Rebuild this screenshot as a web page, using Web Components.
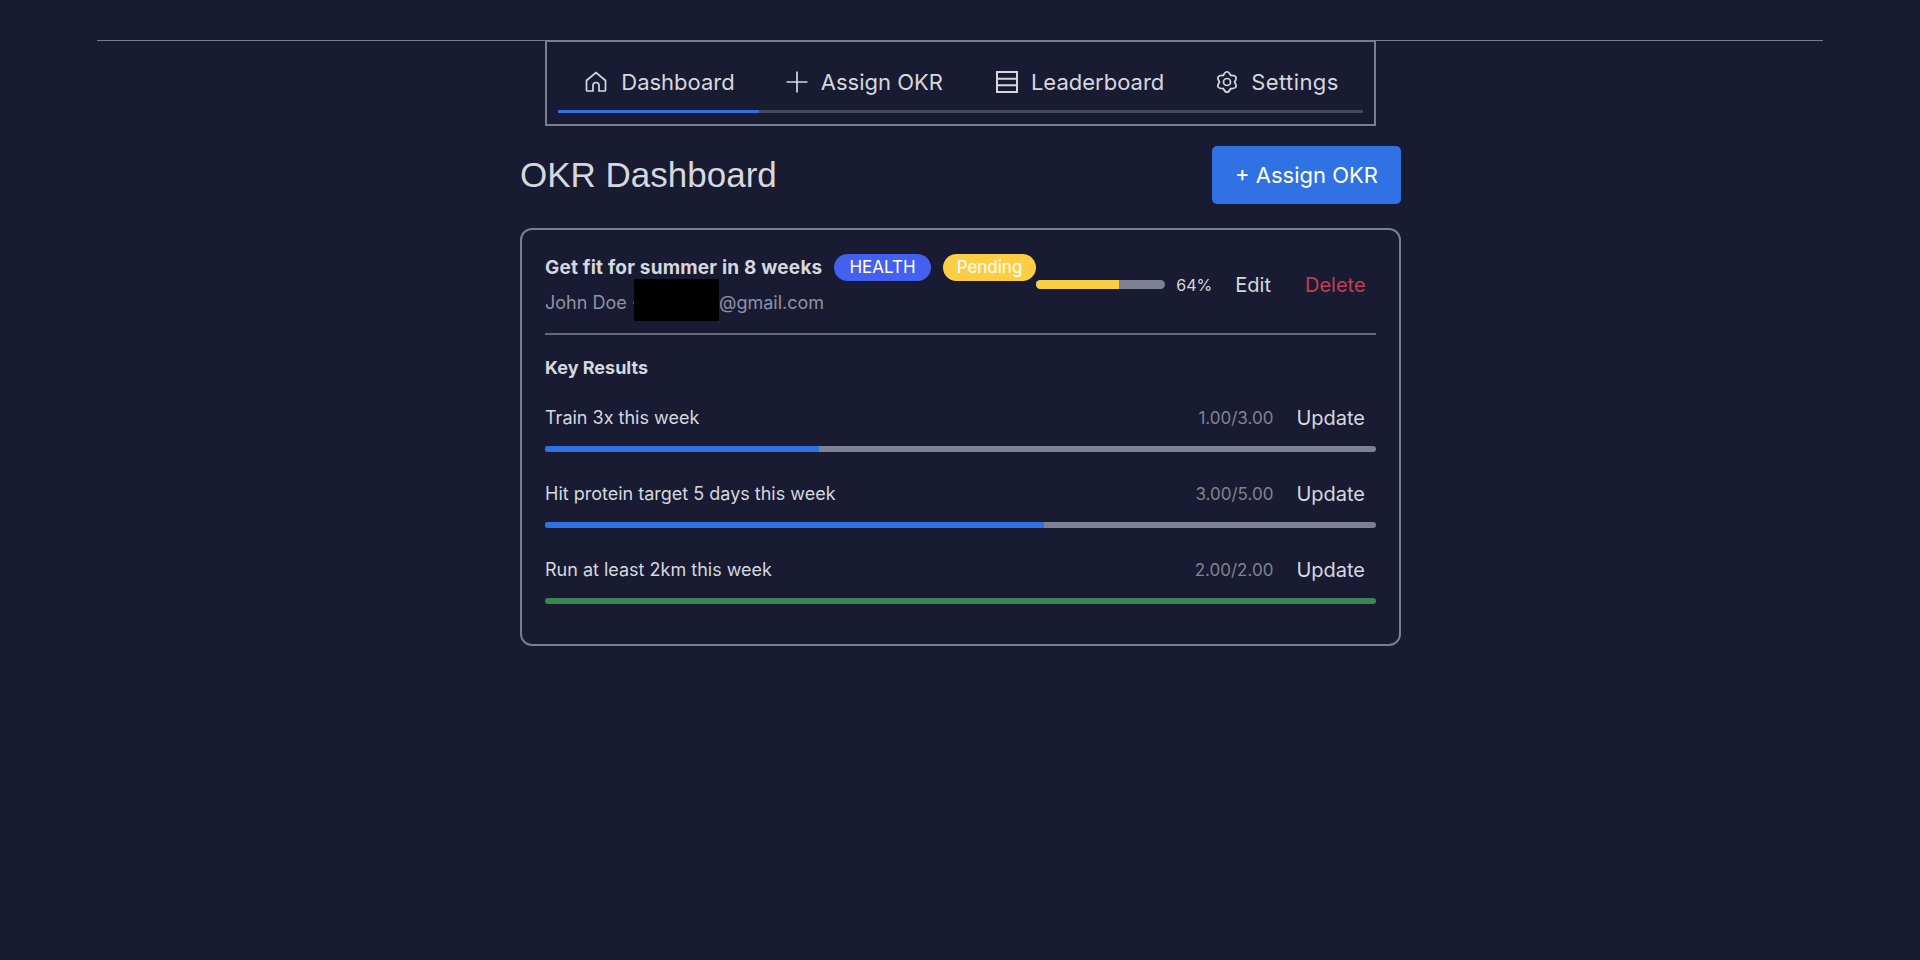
<!DOCTYPE html>
<html>
<head>
<meta charset="utf-8">
<title>OKR Dashboard</title>
<style>
  html, body { margin: 0; height: 100%; background: #191b33; }
  body { font-family: "Inter", "Liberation Sans", sans-serif; color: #d5d8df; }
</style>
</head>
<body>
<okr-app></okr-app>

<script>
const ICONS = {
  home: '<path d="M2.500 10.500 12 2.500l9.500 8V20a1 1 0 0 1-1 1H15v-5.500a3 3 0 0 0-6 0V21H3.500a1 1 0 0 1-1-1z"/>',
  plus: '<path d="M12 1.500v21M1.500 12h21"/>',
  table: '<rect x="2" y="2" width="20" height="20" stroke-width="2"/><path d="M2 8.700h20M2 15.300h20" stroke-width="2"/>',
  gear: '<path d="M8.250 5.500Q12-2 15.750 5.500 24.100 5 19.500 12 24.100 19 15.750 18.500 12 26 8.250 18.500-.1 19 4.500 12-.1 5 8.250 5.500z"/><circle cx="12" cy="12" r="3.500"/>'
}

class NavTab extends HTMLElement {
  connectedCallback () {
    const icon = this.getAttribute('icon')
    const shadow = this.attachShadow({ mode: 'open' })
    shadow.innerHTML = /* html */`
    <style>
      :host{
        display: flex;
        align-items: center;
        gap: 12px;
        height: 71px;
        padding: 11px 26px 0;
        font-size: 22px;
        color: #d5d8df;
        white-space: nowrap;
        box-sizing: border-box;
        border-bottom: 3px solid #44475e;
      }
      :host([active]){
        gap: 13px;
        padding-right: 24px;
        border-bottom-color: #3072e4;
      }
      :host(:last-child){
        padding-left: 25px;
        padding-right: 24px;
        letter-spacing: .4px;
      }
      svg{
        width: 24px;
        height: 24px;
        fill: none;
        stroke: currentColor;
        stroke-width: 1.7;
        flex: none;
      }
    </style>
    <svg viewBox="0 0 24 24">${ICONS[icon]}</svg>
    <slot></slot>
    `
  }
}

class NavBar extends HTMLElement {
  connectedCallback () {
    const shadow = this.attachShadow({ mode: 'open' })
    shadow.innerHTML = /* html */`
    <style>
      :host{
        display: flex;
        justify-content: center;
        padding-top: 40px;
      }
      .rule{
        border-top: 1px solid #797e93;
        width: 1726px;
        display: flex;
        justify-content: center;
      }
      nav{
        display: flex;
        border: 2px solid #797e93;
        border-top-width: 1px;
        padding: 0 11px 11px;
        margin-left: 1px;
      }
    </style>
    <div class="rule">
      <nav>
        <slot></slot>
      </nav>
    </div>
    `
  }
}

class PageHeader extends HTMLElement {
  connectedCallback () {
    const shadow = this.attachShadow({ mode: 'open' })
    shadow.innerHTML = /* html */`
    <style>
      :host{
        display: flex;
        justify-content: space-between;
        align-items: center;
        margin-bottom: 24px;
      }
      h1{
        margin: 0;
        font: 400 35px "Liberation Sans", sans-serif;
        color: #d5d8df;
      }
      button{
        background: #3072e4;
        color: #fff;
        border: none;
        border-radius: 5px;
        font: 400 22px "Inter", sans-serif;
        width: 189px;
        height: 58px;
        padding: 0;
      }
    </style>
    <h1>OKR Dashboard</h1>
    <button>+ Assign OKR</button>
    `
  }
}

class KeyResult extends HTMLElement {
  connectedCallback () {
    const value = this.getAttribute('value')
    const pct = this.getAttribute('pct')
    const color = this.getAttribute('color') || '#3072e4'
    const shadow = this.attachShadow({ mode: 'open' })
    shadow.innerHTML = /* html */`
    <style>
      :host{
        display: block;
        margin-top: 21px;
      }
      .top{
        display: flex;
        align-items: center;
        height: 40px;
        font-size: 18px;
        color: #d5d8df;
      }
      .name{
        flex: 1;
      }
      .value{
        color: #80848f;
        font-size: 17px;
        padding-top: 2px;
      }
      .update{
        font-size: 20px;
        margin-left: 23px;
        padding: 2px 11px 0 0;
      }
      .track{
        height: 6px;
        margin-top: 9px;
        background: #7e8195;
        border-radius: 3px;
        overflow: hidden;
      }
      .fill{
        height: 100%;
        width: ${pct}%;
        background: ${color};
      }
    </style>
    <div class="top">
      <span class="name"><slot></slot></span>
      <span class="value">${value}</span>
      <span class="update">Update</span>
    </div>
    <div class="track"><div class="fill"></div></div>
    `
  }
}

class OkrCard extends HTMLElement {
  connectedCallback () {
    const shadow = this.attachShadow({ mode: 'open' })
    shadow.innerHTML = /* html */`
    <style>
      :host{
        display: block;
        border: 2px solid #797e93;
        border-radius: 12px;
        padding: 23px 23px 40px;
      }
      .head{
        display: flex;
        align-items: center;
        height: 82px;
        box-sizing: border-box;
        border-bottom: 2px solid #65687e;
        padding-bottom: 17px;
      }
      .info{
        display: flex;
        flex-direction: column;
        align-self: flex-start;
      }
      .title-line{
        display: flex;
        align-items: center;
        gap: 12px;
        height: 28px;
      }
      .title{
        font-size: 19px;
        font-weight: 700;
        letter-spacing: .2px;
        white-space: nowrap;
      }
      .pill{
        border-radius: 14px;
        height: 27px;
        padding: 0 15px;
        font-size: 17px;
        display: flex;
        align-items: center;
        color: #fff;
      }
      .health{ background: #4360f0; }
      .pending{ background: #fcce45; padding: 0 14px; }
      .owner{
        color: #8f92a5;
        font-size: 18px;
        margin-top: 10px;
        white-space: nowrap;
      }
      .redact{
        position: relative;
        display: inline-block;
        width: 85px;
        height: 1em;
        margin-left: -8px;
      }
      .redact::after{
        content: "";
        position: absolute;
        left: 0;
        top: -12px;
        width: 85px;
        height: 42px;
        background: #000;
      }
      .meter{
        width: 129px;
        height: 9px;
        background: #7e8195;
        border-radius: 5px;
        overflow: hidden;
        flex: none;
        margin-left: auto;
      }
      .meter div{
        width: 64%;
        height: 100%;
        background: #fcce45;
      }
      .pct{
        font-size: 16px;
        margin-left: 11px;
      }
      .act{
        font-size: 20px;
        margin-left: 23px;
      }
      .del{
        color: #c43d52;
        margin-left: 34px;
        padding-right: 13px;
      }
      h2{
        margin: 24px 0 0;
        font-size: 18px;
        font-weight: 700;
        height: 17px;
        line-height: 17px;
      }
    </style>
    <div class="head">
      <div class="info">
        <div class="title-line">
          <span class="title">Get fit for summer in 8 weeks</span>
          <span class="pill health">HEALTH</span>
          <span class="pill pending">Pending</span>
        </div>
        <div class="owner">John Doe · <span class="redact"></span>@gmail.com</div>
      </div>
      <div class="meter"><div></div></div>
      <span class="pct">64%</span>
      <span class="act">Edit</span>
      <span class="act del">Delete</span>
    </div>
    <h2>Key Results</h2>
    <slot></slot>
    `
  }
}

class OkrApp extends HTMLElement {
  connectedCallback () {
    const shadow = this.attachShadow({ mode: 'open' })
    shadow.innerHTML = /* html */`
    <style>
      :host{
        display: block;
      }
      main{
        width: 881px;
        margin: 20px auto 0 520px;
      }
    </style>
    <nav-bar>
      <nav-tab icon="home" active>Dashboard</nav-tab>
      <nav-tab icon="plus">Assign OKR</nav-tab>
      <nav-tab icon="table">Leaderboard</nav-tab>
      <nav-tab icon="gear">Settings</nav-tab>
    </nav-bar>
    <main>
      <page-header></page-header>
      <okr-card>
        <key-result value="1.00/3.00" pct="33">Train 3x this week</key-result>
        <key-result value="3.00/5.00" pct="60">Hit protein target 5 days this week</key-result>
        <key-result value="2.00/2.00" pct="100" color="#3b8654">Run at least 2km this week</key-result>
      </okr-card>
    </main>
    `
  }
}

customElements.define('nav-tab', NavTab)
customElements.define('nav-bar', NavBar)
customElements.define('page-header', PageHeader)
customElements.define('key-result', KeyResult)
customElements.define('okr-card', OkrCard)
customElements.define('okr-app', OkrApp)
</script>
</body>
</html>
